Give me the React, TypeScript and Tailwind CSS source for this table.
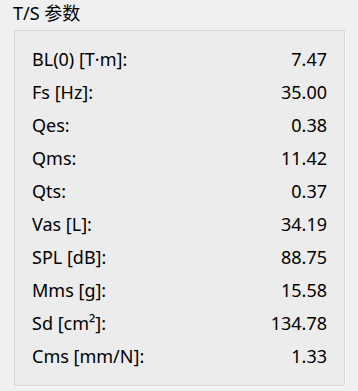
export default function App() {
  const rows: [string, string][] = [
    ["BL(0) [T·m]:", "7.47"],
    ["Fs [Hz]:", "35.00"],
    ["Qes:", "0.38"],
    ["Qms:", "11.42"],
    ["Qts:", "0.37"],
    ["Vas [L]:", "34.19"],
    ["SPL [dB]:", "88.75"],
    ["Mms [g]:", "15.58"],
    ["Sd [cm²]:", "134.78"],
    ["Cms [mm/N]:", "1.33"],
  ];
  return (
    <div
      className="w-[358px] h-[391px] bg-[#f0f0f0] text-black overflow-hidden"
      style={{ fontFamily: '"Noto Sans", "Noto Sans CJK SC", sans-serif' }}
    >
      <div className="pl-[13px] pt-[1px] h-[30px] text-[18px] leading-[24px]">T/S 参数</div>
      <div className="ml-[14px] w-[331px] h-[356px] border border-[#d6d6d6] bg-[#ececec] shadow-[1px_1px_0_#fafafa] pl-[17px] pr-[17px] pt-[11px] flex flex-col">
        {rows.map(([l, v]) => (
          <div key={l} className="h-[33px] flex items-center justify-between text-[18px] leading-[24px]">
            <span>{l}</span>
            <span>{v}</span>
          </div>
        ))}
      </div>
    </div>
  );
}
